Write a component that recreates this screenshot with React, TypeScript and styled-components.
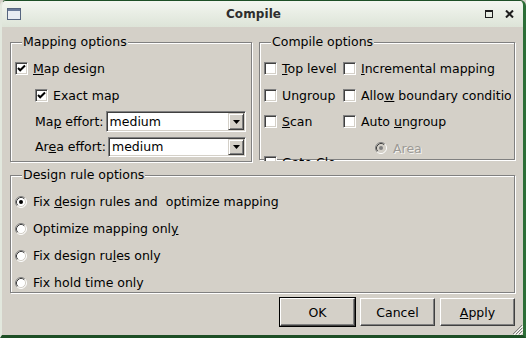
import React from 'react';
import styled, { createGlobalStyle } from 'styled-components';

const Global = createGlobalStyle`
  html, body { margin: 0; padding: 0; background: #d4d0c8; }
  body { width: 526px; height: 338px; overflow: hidden; }
`;

const FONT = `"DejaVu Sans", "Liberation Sans", sans-serif`;

const Window = styled.div`
  position: relative;
  width: 526px;
  height: 338px;
  box-sizing: border-box;
  display: flex;
  flex-direction: column;
  background: #d4d0c8;
  border-top: 1px solid #1d4f26;
  border-left: 2px solid #e2e8de;
  border-right: 3px solid #2c6e37;
  border-bottom: 3px solid #1d4f26;
  border-radius: 6px 6px 0 0;
  overflow: hidden;
  font-family: ${FONT};
  font-size: 12.5px;
  color: #000;
`;

const TitleBar = styled.div`
  height: 26px;
  flex: none;
  display: flex;
  align-items: center;
  padding: 0 9px 0 5px;
  background: linear-gradient(#f3f6f0, #dde4d8);
  box-sizing: border-box;
`;

const Title = styled.div`
  flex: 1;
  text-align: center;
  font-weight: bold;
  font-size: 12px;
  color: #2e2e2e;
  letter-spacing: 0.1px;
`;

const TitleControls = styled.div`
  display: flex;
  align-items: center;
  gap: 12px;
`;

const Body = styled.div`
  flex: 1;
  display: flex;
  flex-direction: column;
  padding: 8px 8px 0 8px;
`;

const TopRow = styled.div`
  display: flex;
  gap: 6px;
  height: 128px;
`;

const Clip = styled.div<{ $w: number }>`
  width: ${p => p.$w + 1}px;
  height: 128px;
  overflow: hidden;
  flex: none;
`;

const Group = styled.fieldset<{ $w: number; $h: number }>`
  box-sizing: border-box;
  margin: 0;
  min-width: 0;
  width: ${p => p.$w}px;
  height: ${p => p.$h}px;
  padding: 6px 4px 0 4px;
  border: 1px solid #808080;
  box-shadow: inset 1px 1px 0 #fff, 1px 1px 0 #fff;
`;

const Legend = styled.legend`
  margin-left: 7px;
  padding: 0 1px;
  line-height: 14px;
  background: #d4d0c8;
`;

const MapGrid = styled.div`
  display: grid;
  grid-template-rows: 27px 27px 25px 25px;
`;

const Row = styled.div<{ $indent?: number }>`
  display: flex;
  align-items: center;
  padding-left: ${p => p.$indent ?? 0}px;
  min-width: 0;
`;

const Item = styled.label<{ $gap?: number; $disabled?: boolean }>`
  display: flex;
  align-items: center;
  gap: ${p => p.$gap ?? 5}px;
  white-space: nowrap;
  color: ${p => (p.$disabled ? '#9c9a96' : '#000')};
  text-shadow: ${p => (p.$disabled ? '1px 1px 0 #f4f2ee' : 'none')};
`;

const Key = styled.span`
  text-decoration: underline;
`;

const BoxFrame = styled.span`
  width: 13px;
  height: 13px;
  box-sizing: border-box;
  flex: none;
  border: 1px solid;
  border-color: #808080 #fff #fff #808080;
  box-shadow: inset 1px 1px 0 #404040, inset -1px -1px 0 #d4d0c8;
  background: #fff;
  display: flex;
  align-items: center;
  justify-content: center;
`;

const ComboLabel = styled.span`
  white-space: nowrap;
  margin-right: 2px;
`;

const ComboField = styled.div<{ $h: number }>`
  flex: 1;
  height: ${p => p.$h}px;
  margin-right: 1px;
  box-sizing: border-box;
  border: 1px solid;
  border-color: #808080 #fff #fff #808080;
  box-shadow: inset 1px 1px 0 #404040, inset -1px -1px 0 #d4d0c8;
  background: #fff;
  display: flex;
  align-items: center;
  padding: 1px 1px 1px 3px;
`;

const ComboText = styled.span`
  flex: 1;
`;

const ComboButton = styled.span`
  width: 16px;
  height: 100%;
  box-sizing: border-box;
  background: #d4d0c8;
  border: 1px solid;
  border-color: #d4d0c8 #404040 #404040 #d4d0c8;
  box-shadow: inset 1px 1px 0 #fff, inset -1px -1px 0 #808080;
  display: flex;
  align-items: center;
  justify-content: center;
`;

const CompileGrid = styled.div`
  display: grid;
  grid-template-columns: 79px 168px;
  grid-template-rows: 27px 26px 27px 26px;
`;

const Cell = styled.div<{ $offsetTop?: number; $indent?: number }>`
  display: flex;
  align-items: ${p => (p.$offsetTop ? 'flex-start' : 'center')};
  padding-top: ${p => p.$offsetTop ?? 0}px;
  padding-left: ${p => p.$indent ?? 0}px;
  overflow: hidden;
  max-width: ${p => (p.$offsetTop ? 73 : 1000)}px;
`;

const DesignWrap = styled.div`
  margin-top: 5px;
`;

const RadioList = styled.div`
  display: grid;
  grid-template-rows: repeat(4, 27px);
`;

const ButtonRow = styled.div`
  display: flex;
  justify-content: flex-end;
  gap: 5px;
  margin-top: 5px;
`;

const Button = styled.button<{ $default?: boolean }>`
  width: 75px;
  height: 28px;
  box-sizing: border-box;
  font-family: ${FONT};
  font-size: 12.5px;
  color: #000;
  background: #d4d0c8;
  border: 1px solid;
  border-color: #fff #404040 #404040 #fff;
  box-shadow: inset -1px -1px 0 #808080;
  outline: ${p => (p.$default ? '1px solid #000' : 'none')};
  padding: 0;
`;

const Grip = styled.svg`
  position: absolute;
  right: 0;
  bottom: 0;
`;

const CheckBox: React.FC<{ checked?: boolean }> = ({ checked }) => (
  <BoxFrame>
    {checked && (
      <svg width="9" height="9" viewBox="0 0 9 9">
        <path d="M1 4 L3.2 6.3 L8 1.5" stroke="#000" strokeWidth="2" fill="none" />
      </svg>
    )}
  </BoxFrame>
);

const Radio: React.FC<{ checked?: boolean; disabled?: boolean }> = ({ checked, disabled }) => (
  <svg width="12" height="12" viewBox="0 0 12 12" style={{ flex: 'none' }}>
    <circle cx="6" cy="6" r="5" fill={disabled ? '#d4d0c8' : '#fff'} />
    <path d="M2.11 9.89 A5.5 5.5 0 0 1 9.89 2.11" stroke="#808080" strokeWidth="1" fill="none" />
    <path d="M9.89 2.11 A5.5 5.5 0 0 1 2.11 9.89" stroke="#fff" strokeWidth="1" fill="none" />
    <path d="M2.82 9.18 A4.5 4.5 0 0 1 9.18 2.82" stroke="#404040" strokeWidth="1" fill="none" />
    <path d="M9.18 2.82 A4.5 4.5 0 0 1 2.82 9.18" stroke="#d4d0c8" strokeWidth="1" fill="none" />
    {checked && <circle cx="6" cy="6" r="2" fill={disabled ? '#808080' : '#000'} />}
  </svg>
);

const Combo: React.FC<{ value: string; h: number }> = ({ value, h }) => (
  <ComboField $h={h}>
    <ComboText>{value}</ComboText>
    <ComboButton>
      <svg width="7" height="4" viewBox="0 0 7 4">
        <path d="M0 0 H7 L3.5 4 Z" fill="#000" />
      </svg>
    </ComboButton>
  </ComboField>
);

export default function App() {
  return (
    <>
      <Global />
      <Window>
        <TitleBar>
          <svg width="15" height="12" viewBox="0 0 15 12">
            <rect x="0.5" y="0.5" width="13" height="11" fill="#e9edf2" stroke="#56657f" />
            <rect x="1" y="1" width="12" height="2" fill="#6a7b99" />
          </svg>
          <Title>Compile</Title>
          <TitleControls>
            <svg width="8" height="8" viewBox="0 0 8 8">
              <rect x="0.5" y="0.5" width="7" height="7" fill="none" stroke="#1e1e1e" />
              <rect x="0" y="0" width="8" height="2" fill="#1e1e1e" />
            </svg>
            <svg width="9" height="8" viewBox="0 0 9 8">
              <path d="M1 0.5 L8 7.5 M8 0.5 L1 7.5" stroke="#1e1e1e" strokeWidth="2" />
            </svg>
          </TitleControls>
        </TitleBar>
        <Body>
          <TopRow>
            <Clip $w={242}>
              <Group $w={242} $h={127}>
                <Legend>Mapping options</Legend>
                <MapGrid>
                  <Row>
                    <Item>
                      <CheckBox checked />
                      <span>
                        <Key>M</Key>ap design
                      </span>
                    </Item>
                  </Row>
                  <Row $indent={20}>
                    <Item>
                      <CheckBox checked />
                      <span>Exact map</span>
                    </Item>
                  </Row>
                  <Row $indent={20}>
                    <ComboLabel>
                      Ma<Key>p</Key> effort:
                    </ComboLabel>
                    <Combo value="medium" h={21} />
                  </Row>
                  <Row $indent={20}>
                    <ComboLabel>
                      Ar<Key>e</Key>a effort:
                    </ComboLabel>
                    <Combo value="medium" h={20} />
                  </Row>
                </MapGrid>
              </Group>
            </Clip>
            <Clip $w={256}>
              <Group $w={256} $h={125}>
                <Legend>Compile options</Legend>
                <CompileGrid>
                  <Cell>
                    <Item>
                      <CheckBox />
                      <span>
                        <Key>T</Key>op level
                      </span>
                    </Item>
                  </Cell>
                  <Cell>
                    <Item>
                      <CheckBox />
                      <span>
                        <Key>I</Key>ncremental mapping
                      </span>
                    </Item>
                  </Cell>
                  <Cell>
                    <Item>
                      <CheckBox />
                      <span>
                        Un<Key>g</Key>roup
                      </span>
                    </Item>
                  </Cell>
                  <Cell>
                    <Item>
                      <CheckBox />
                      <span>
                        Allo<Key>w</Key> boundary conditions
                      </span>
                    </Item>
                  </Cell>
                  <Cell>
                    <Item>
                      <CheckBox />
                      <span>
                        <Key>S</Key>can
                      </span>
                    </Item>
                  </Cell>
                  <Cell>
                    <Item>
                      <CheckBox />
                      <span>
                        Auto <Key>u</Key>ngroup
                      </span>
                    </Item>
                  </Cell>
                  <Cell $offsetTop={20}>
                    <Item>
                      <CheckBox />
                      <span>Gate Clock</span>
                    </Item>
                  </Cell>
                  <Cell $indent={32}>
                    <Item $gap={6} $disabled>
                      <Radio checked disabled />
                      <span>Area</span>
                    </Item>
                  </Cell>
                </CompileGrid>
              </Group>
            </Clip>
          </TopRow>
          <DesignWrap>
            <Group $w={505} $h={125}>
              <Legend>Design rule options</Legend>
              <RadioList>
                <Row>
                  <Item $gap={6}>
                    <Radio checked />
                    <span>
                      Fix <Key>d</Key>esign rules and&nbsp; optimize mapping
                    </span>
                  </Item>
                </Row>
                <Row>
                  <Item $gap={6}>
                    <Radio />
                    <span>
                      Optimize mapping onl<Key>y</Key>
                    </span>
                  </Item>
                </Row>
                <Row>
                  <Item $gap={6}>
                    <Radio />
                    <span>
                      Fix design ru<Key>l</Key>es only
                    </span>
                  </Item>
                </Row>
                <Row>
                  <Item $gap={6}>
                    <Radio />
                    <span>Fix hold time only</span>
                  </Item>
                </Row>
              </RadioList>
            </Group>
          </DesignWrap>
          <ButtonRow>
            <Button $default>OK</Button>
            <Button>Cancel</Button>
            <Button>
              <Key>A</Key>pply
            </Button>
          </ButtonRow>
        </Body>
        <Grip width="11" height="11" viewBox="0 0 11 11">
          <path d="M10 1 L1 10 M10 4 L4 10 M10 7 L7 10" stroke="#808080" strokeWidth="1" />
          <path d="M11 2 L2 11 M11 5 L5 11 M11 8 L8 11" stroke="#fff" strokeWidth="1" />
        </Grip>
      </Window>
    </>
  );
}
